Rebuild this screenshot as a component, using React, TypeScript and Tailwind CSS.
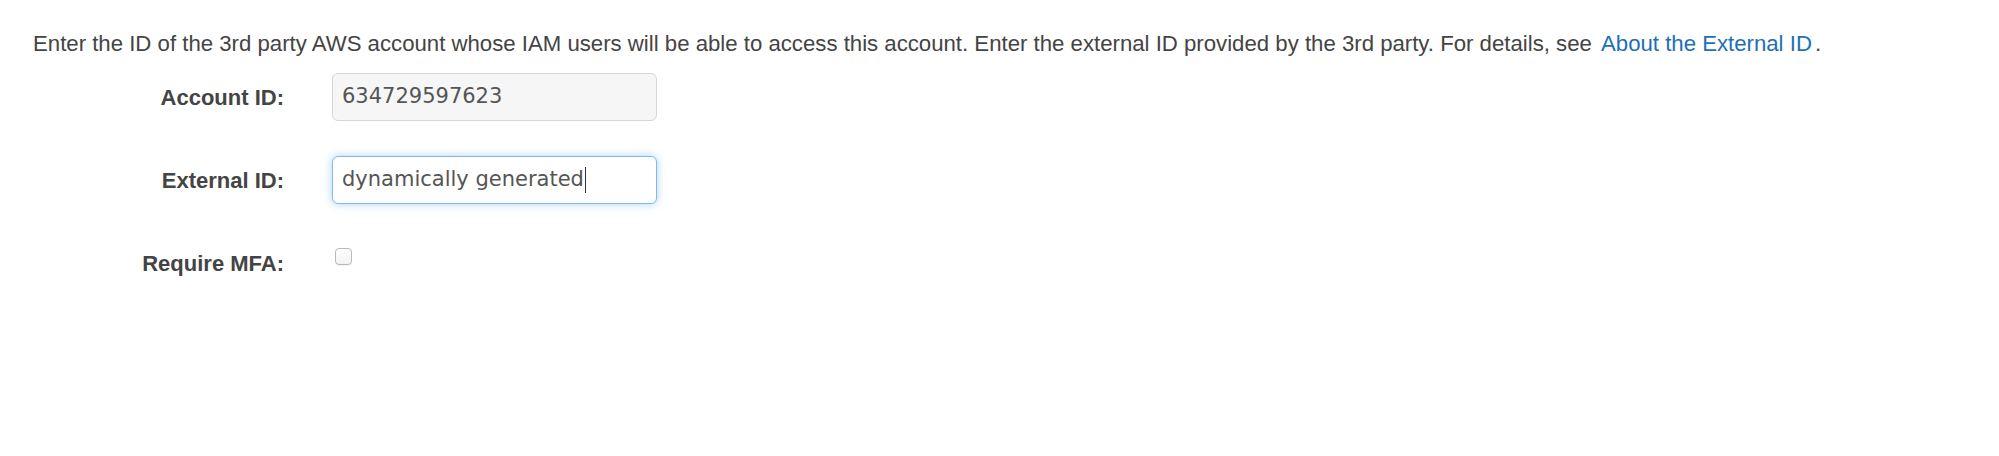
export default function App() {
  return (
    <div className="min-h-[456px] w-full bg-white pl-[33px] pt-[28px] text-[#444]" style={{ fontFamily: '"Liberation Sans", Arial, sans-serif' }}>
      {/* Intro text */}
      <p className="text-[22.2px] leading-[32px]">
        Enter the ID of the 3rd party AWS account whose IAM users will be able to access this account. Enter the external ID
        provided by the 3rd party. For details, see{" "}
        <a href="#" className="ml-[3px] text-[#1d6fb8]">
          About the External ID
        </a>
        <span className="ml-[3px]">.</span>
      </p>

      {/* Form rows */}
      <div className="mt-[13px] flex flex-col gap-[35px]">
        <div className="flex items-center gap-[48px]">
          <label className="w-[251px] text-right text-[22px] font-bold text-[#444]">Account ID:</label>
          <div
            className="flex h-[48px] w-[325px] items-center rounded-[6px] border border-[#d6d6d6] bg-[#f6f6f6] pl-[9px] text-[21px] text-[#555]"
            style={{ fontFamily: '"DejaVu Sans", sans-serif' }}
          >
            634729597623
          </div>
        </div>

        <div className="flex items-center gap-[48px]">
          <label className="w-[251px] text-right text-[22px] font-bold text-[#444]">External ID:</label>
          <div
            className="flex h-[48px] w-[325px] items-center rounded-[6px] border border-[#7dbbee] bg-white pl-[9px] text-[21px] text-[#555] shadow-[0_0_8px_rgba(102,175,233,0.55)]"
            style={{ fontFamily: '"DejaVu Sans", sans-serif' }}
          >
            <span>dynamically generated</span>
            <span className="ml-[1px] h-[26px] w-px bg-[#333]" />
          </div>
        </div>

        <div className="flex items-start gap-[48px]">
          <label className="mt-[9px] w-[251px] text-right text-[22px] leading-[32px] font-bold text-[#444]">Require MFA:</label>
          <div className="ml-[3px] mt-[9px] h-[17px] w-[17px] rounded-[4px] border border-[#b9b9b9] bg-gradient-to-b from-white to-[#f3f3f3] shadow-[0_1px_1px_rgba(0,0,0,0.06)]" />
        </div>
      </div>
    </div>
  );
}
